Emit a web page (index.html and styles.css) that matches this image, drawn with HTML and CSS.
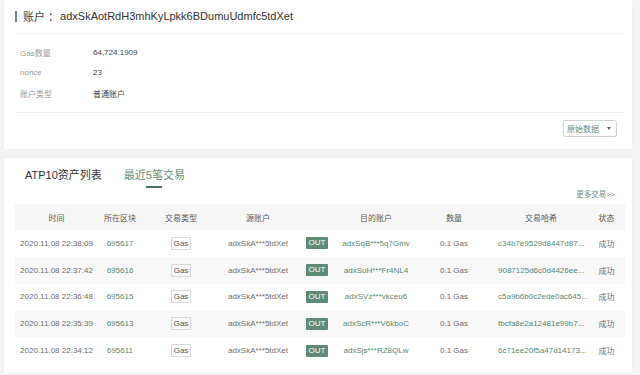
FILE: index.html
```html
<!DOCTYPE html>
<html lang="zh">
<head>
<meta charset="utf-8">
<title>账户</title>
<link rel="stylesheet" href="styles.css">
</head>
<body>
<div class="page">
  <section class="card card-account">
    <div class="card-title"><span class="bar"></span><span class="tlabel">账户 ：</span><span class="addr">adxSkAotRdH3mhKyLpkk6BDumuUdmfc5tdXet</span></div>
    <div class="info">
      <div class="info-row"><span class="k">Gas数量</span><span class="v">64,724.1909</span></div>
      <div class="info-row"><span class="k">nonce</span><span class="v">23</span></div>
      <div class="info-row"><span class="k">账户类型</span><span class="v">普通账户</span></div>
    </div>
    <div class="actions"><button class="raw">原始数据<span class="caret"></span></button></div>
  </section>

  <section class="card card-tx">
    <div class="tabs"><span class="tab">ATP10资产列表</span><span class="tab active">最近5笔交易</span></div>
    <div class="more-row"><span class="more">更多交易&gt;&gt;</span></div>
    <table class="tx">
      <colgroup>
        <col class="c1"><col class="c2"><col class="c3"><col class="c4"><col class="c5"><col class="c6"><col class="c7"><col class="c8"><col class="c9">
      </colgroup>
      <thead>
        <tr><th>时间</th><th>所在区块</th><th>交易类型</th><th>源账户</th><th></th><th>目的账户</th><th>数量</th><th>交易哈希</th><th>状态</th></tr>
      </thead>
      <tbody>
        <tr><td>2020.11.08 22:38:09</td><td class="link">695617</td><td><span class="gas">Gas</span></td><td>adxSkA***5tdXet</td><td><span class="out">OUT</span></td><td class="link">adxSqB***5q7Gmv</td><td>0.1 Gas</td><td class="link hash">c34b7e9529d8447d87...</td><td>成功</td></tr>
        <tr><td>2020.11.08 22:37:42</td><td class="link">695616</td><td><span class="gas">Gas</span></td><td>adxSkA***5tdXet</td><td><span class="out">OUT</span></td><td class="link">adxSuH***Fr4NL4</td><td>0.1 Gas</td><td class="link hash">9087125d6c0d4426ee...</td><td>成功</td></tr>
        <tr><td>2020.11.08 22:36:48</td><td class="link">695615</td><td><span class="gas">Gas</span></td><td>adxSkA***5tdXet</td><td><span class="out">OUT</span></td><td class="link">adxSVz***vkceu6</td><td>0.1 Gas</td><td class="link hash">c5a9b6b0c2ede0ac645...</td><td>成功</td></tr>
        <tr><td>2020.11.08 22:35:39</td><td class="link">695613</td><td><span class="gas">Gas</span></td><td>adxSkA***5tdXet</td><td><span class="out">OUT</span></td><td class="link">adxScR***V6kboC</td><td>0.1 Gas</td><td class="link hash">fbcfa8e2a12481e99b7...</td><td>成功</td></tr>
        <tr><td>2020.11.08 22:34:12</td><td class="link">695611</td><td><span class="gas">Gas</span></td><td>adxSkA***5tdXet</td><td><span class="out">OUT</span></td><td class="link">adxSjs***RZ8QLw</td><td>0.1 Gas</td><td class="link hash">6c71ee20f5a47d14173...</td><td>成功</td></tr>
      </tbody>
    </table>
  </section>
</div>
</body>
</html>
```

FILE: styles.css
```css
* { box-sizing: border-box; }
html, body { margin: 0; padding: 0; }
body {
  background: #f3f3f3;
  font-family: "Liberation Sans", "Noto Sans CJK SC", sans-serif;
  color: #555;
  width: 640px;
  height: 375px;
  overflow: hidden;
}
.page {
  display: flex;
  flex-direction: column;
  gap: 9px;
  padding: 0 8px 0 4px;
}
.card {
  background: #fff;
  border-radius: 2px;
  box-shadow: 0 0 3px rgba(0,0,0,0.04);
}

/* account card */
.card-account {
  height: 149px;
  padding: 0 8px 0 11px;
  display: flex;
  flex-direction: column;
}
.card-title {
  height: 34px;
  display: flex;
  align-items: center;
  border-bottom: 1px solid #f1f1f1;
  font-size: 11px;
  color: #333;
  padding-bottom: 1px;
}
.bar {
  width: 2px;
  height: 11px;
  background: #6f8a80;
  margin-right: 6px;
}
.tlabel { color: #444; margin-right: 1px; }
.addr { color: #333; }

.info {
  padding: 8px 0 8px 5px;
  border-bottom: 1px solid #f1f1f1;
}
.info-row {
  height: 20.5px;
  display: flex;
  align-items: center;
  font-size: 8px;
}
.k { width: 73px; color: #999; }
.v { color: #444; }

.actions {
  display: flex;
  justify-content: flex-end;
  padding: 7px 7px 0 0;
}
.raw {
  height: 17px;
  padding: 0 5px 0 3px;
  border: 1px solid #cfd3d1;
  border-radius: 2px;
  background: #fff;
  font-family: "Liberation Sans", "Noto Sans CJK SC", sans-serif;
  font-size: 8px;
  color: #6c8c80;
  display: flex;
  align-items: center;
  gap: 8px;
}
.caret {
  width: 0;
  height: 0;
  border-left: 2.5px solid transparent;
  border-right: 2.5px solid transparent;
  border-top: 3px solid #666;
}

/* tx card */
.card-tx {
  height: 215px;
  padding: 10px 7px 0 11px;
  display: flex;
  flex-direction: column;
}
.tabs {
  display: flex;
  gap: 22px;
  padding-left: 10px;
  align-items: flex-start;
}
.tab {
  font-size: 11px;
  line-height: 14px;
  color: #333;
  display: flex;
  flex-direction: column;
  align-items: center;
}
.tab.active { color: #5f9179; }
.tab.active::after {
  content: "";
  display: block;
  width: 16px;
  height: 2px;
  background: #4d6d62;
  margin-top: 4px;
}
.tab:not(.active) { padding-bottom: 6px; }
.more-row {
  display: flex;
  justify-content: flex-end;
  padding-right: 10px;
  height: 10px;
  align-items: center;
}
.more {
  font-size: 7.5px;
  color: #6d8f82;
}

.tx {
  margin-top: 6px;
  width: 610px;
  border-collapse: collapse;
  table-layout: fixed;
  font-size: 8px;
}
.c1 { width: 83px; } .c2 { width: 44px; } .c3 { width: 78px; }
.c4 { width: 76px; } .c5 { width: 42px; } .c6 { width: 76px; }
.c7 { width: 80px; } .c8 { width: 94px; } .c9 { width: 37px; }
.tx th {
  height: 26px;
  background: #f6f6f6;
  font-weight: normal;
  color: #5a5a5a;
  text-align: center;
  padding: 0;
}
.tx td {
  height: 26.8px;
  text-align: center;
  color: #6e6e6e;
  padding: 0;
  white-space: nowrap;
  overflow: hidden;
}
.tx tbody tr:nth-child(even) td { background: #f8f8f8; }
.tx td.link { color: #558c74; }
.tx td.hash { text-align: left; padding-left: 4px; }
.gas {
  display: inline-block;
  border: 1px solid #dadada;
  padding: 0 2px;
  line-height: 11px;
  color: #555;
}
.out {
  display: inline-block;
  background: #5f8a76;
  color: #fff;
  padding: 0 3px;
  line-height: 12px;
  border-radius: 1px;
}
```
